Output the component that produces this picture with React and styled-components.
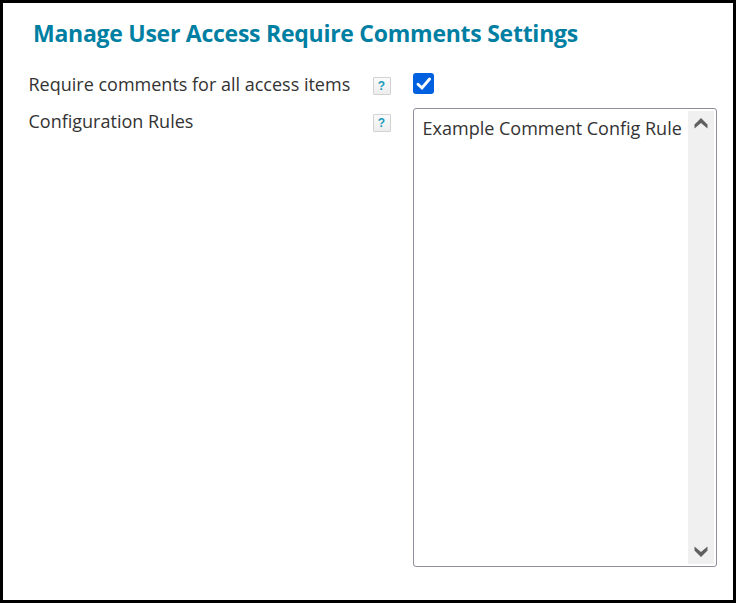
import React, { useState } from 'react';
import styled, { createGlobalStyle } from 'styled-components';

const rules = ['Example Comment Config Rule'];

const App = () => {
  const [required, setRequired] = useState(true);

  return (
    <>
      <GlobalStyle />
      <Panel>
        <Title>Manage User Access Require Comments Settings</Title>
        <SettingRow height="36px">
          <Label>Require comments for all access items</Label>
          <HelpIcon />
          <Checkbox
            type="button"
            role="checkbox"
            aria-checked={required}
            checked={required}
            onClick={() => setRequired(!required)}
          >
            {required && (
              <svg width="21" height="21" viewBox="0 0 21 21" fill="none">
                <path
                  d="M5 11.2L9 15L16.6 6"
                  stroke="#fff"
                  strokeWidth="2.9"
                  strokeLinecap="round"
                />
              </svg>
            )}
          </Checkbox>
        </SettingRow>
        <SettingRow offset="1px">
          <Label>Configuration Rules</Label>
          <HelpIcon />
          <ListBox>
            <Options>
              {rules.map(rule => <Option key={rule}>{rule}</Option>)}
            </Options>
            <ScrollTrack>
              <Arrow d="M0.5 7.4L7 0.9L13.5 7.4V11.6L7 5.9L0.5 11.6Z" />
              <Arrow d="M0.5 1.4L7 7.1L13.5 1.4V5.6L7 12.1L0.5 5.6Z" />
            </ScrollTrack>
          </ListBox>
        </SettingRow>
      </Panel>
    </>
  );
};

const HelpIcon = () => <HelpButton type="button">?</HelpButton>;

const Arrow = ({ d }) => (
  <svg width="14" height="13" viewBox="0 0 14 13">
    <path d={d} fill="#606060" />
  </svg>
);

const GlobalStyle = createGlobalStyle`
  * {
    box-sizing: border-box;
  }
  body {
    margin: 0;
    background-color: #fff;
    color: #333;
    font-family: 'Open Sans', sans-serif;
  }
`;

const Panel = styled.main`
  width: 736px;
  height: 603px;
  padding: 14px 16px 0 26px;
  border: 3px solid #000;
  background-color: #fff;
`;

const Title = styled.h1`
  margin: 0 0 23px 4px;
  color: #007fa3;
  font-size: 23px;
  font-weight: 700;
  line-height: 32px;
  letter-spacing: -0.26px;
  white-space: nowrap;
`;

const Label = styled.span`
  margin-left: -0.5px;
  font-size: 18px;
  line-height: 24px;
  white-space: nowrap;
`;

const HelpButton = styled.button`
  display: flex;
  align-items: center;
  justify-content: center;
  width: 18px;
  height: 18px;
  padding: 0 1px 0 0;
  border: 1px solid #d2d2d2;
  border-radius: 1px;
  background: linear-gradient(#fbfbfb, #ededed);
  color: #1899b8;
  font: bold 12px/16px 'Liberation Sans', sans-serif;
  cursor: pointer;
`;

const SettingRow = styled.div`
  display: grid;
  grid-template-columns: 344px 40px 304px;
  align-items: start;
  height: ${props => props.height || 'auto'};
  ${Label} {
    padding-top: ${props => props.offset || 0};
  }
  ${HelpButton} {
    margin-top: calc(5px + ${props => props.offset || '0px'});
  }
`;

const Checkbox = styled.button`
  width: 21px;
  height: 21px;
  margin-top: 1px;
  padding: 0;
  border: ${props => props.checked ? 'none' : '1px solid #8f8f9d'};
  border-radius: 3px;
  background-color: ${props => props.checked ? '#0060df' : '#fff'};
  cursor: pointer;
  svg {
    display: block;
  }
`;

const ListBox = styled.div`
  display: flex;
  width: 304px;
  height: 459px;
  padding: 2px;
  border: 1px solid #8f8f9d;
  border-radius: 3px;
  background-color: #fff;
`;

const Options = styled.ul`
  flex: 1;
  min-width: 0;
  margin: 0;
  padding: 5px 0 0 6.6px;
  list-style: none;
`;

const Option = styled.li`
  font-size: 18px;
  line-height: 24px;
  white-space: nowrap;
`;

const ScrollTrack = styled.div`
  display: flex;
  flex-direction: column;
  align-items: center;
  justify-content: space-between;
  width: 26px;
  padding: 6px 0;
  background-color: #f0f0f0;
`;

export default App;
